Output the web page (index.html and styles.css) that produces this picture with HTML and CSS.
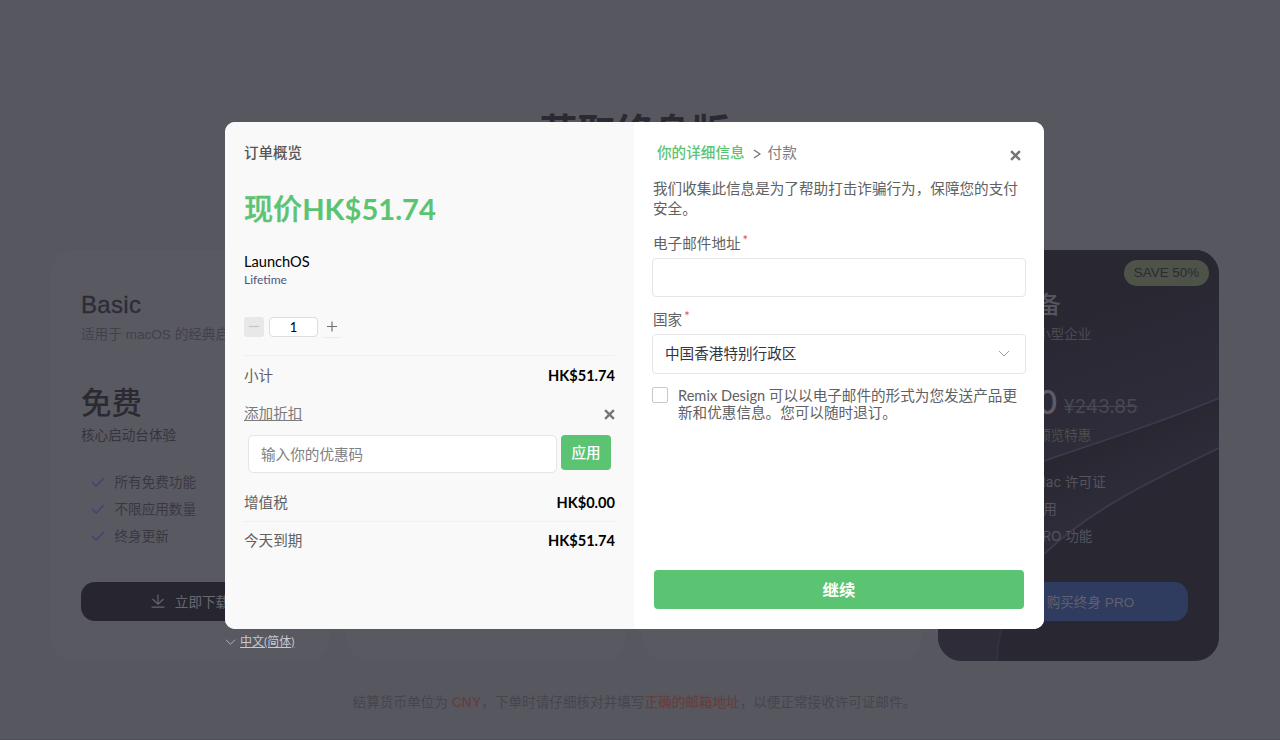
FILE: index.html
```html
<!DOCTYPE html>
<html lang="zh-CN">
<head>
<meta charset="utf-8">
<title>LaunchOS</title>
<link rel="stylesheet" href="styles.css">
</head>
<body>
<main class="page">
  <h1 class="page-title">获取终身版</h1>
  <section class="plans">
    <article class="plan">
      <h2 class="plan-name">Basic</h2>
      <p class="plan-desc">适用于 macOS 的经典启动台</p>
      <div class="plan-price">免费</div>
      <p class="plan-note">核心启动台体验</p>
      <ul class="features">
        <li><svg class="tick" viewBox="0 0 14 12"><path d="M1 6 5.2 10 13 2"/></svg>所有免费功能</li>
        <li><svg class="tick" viewBox="0 0 14 12"><path d="M1 6 5.2 10 13 2"/></svg>不限应用数量</li>
        <li><svg class="tick" viewBox="0 0 14 12"><path d="M1 6 5.2 10 13 2"/></svg>终身更新</li>
      </ul>
      <div class="plan-btn"><svg class="dl" viewBox="0 0 14 14"><path d="M7 0.5V10M1.5 5 7 10.2 12.5 5M0.5 13.2H13.5"/></svg>立即下载</div>
    </article>
    <article class="plan"></article>
    <article class="plan"></article>
    <article class="plan plan-dark">
      <svg class="waves" viewBox="0 0 281 411" preserveAspectRatio="none">
        <defs>
          <linearGradient id="w1" x1="0" y1="0" x2="0.35" y2="1"><stop offset="0.35" stop-color="#292731"/><stop offset="1" stop-color="#302e3d"/></linearGradient>
          <linearGradient id="w2" gradientUnits="userSpaceOnUse" x1="200" y1="175" x2="225" y2="235"><stop offset="0" stop-color="#282731"/><stop offset="1" stop-color="#2e2c39"/></linearGradient>
          <linearGradient id="w3" gradientUnits="userSpaceOnUse" x1="0" y1="290" x2="0" y2="380"><stop offset="0" stop-color="#3b394b"/><stop offset="1" stop-color="#33313f"/></linearGradient>
        </defs>
        <path fill="url(#w1)" d="M0 0H281V148C220 174 160 192 106 211C60 226 30 240 0 260Z"/>
        <path fill="url(#w2)" d="M281 148C220 174 160 192 106 211C60 226 30 240 0 260V411H59C60 370 78 330 106 304C155 258 215 230 281 198Z"/>
        <path class="wave-line" d="M281 148C220 174 160 192 106 211C60 226 30 240 0 260"/>
        <path class="wave-line" style="stroke:url(#w3)" d="M281 198C215 230 155 258 106 304C78 330 60 370 59 411"/>
      </svg>
      <span class="save">SAVE 50%</span>
      <h2 class="plan-name">3 台设备</h2>
      <p class="plan-desc">适合团队和小型企业</p>
      <div class="plan-price"><span class="now">¥120</span><s>¥243.85</s></div>
      <p class="plan-note">限时抢先版预览特惠</p>
      <ul class="features">
        <li><svg class="tick" viewBox="0 0 14 12"><path d="M1 6 5.2 10 13 2"/></svg>三台 Mac 许可证</li>
        <li><svg class="tick" viewBox="0 0 14 12"><path d="M1 6 5.2 10 13 2"/></svg>终身使用</li>
        <li><svg class="tick" viewBox="0 0 14 12"><path d="M1 6 5.2 10 13 2"/></svg>所有 PRO 功能</li>
      </ul>
      <div class="plan-btn"><svg class="dl" viewBox="0 0 14 14"><path d="M1 3H13V11H1ZM1 6H13"/></svg>购买终身 PRO</div>
    </article>
  </section>
  <p class="notice">结算货币单位为 <b>CNY</b>，下单时请仔细核对并填写<b>正确的邮箱地址</b>，以便正常接收许可证邮件。</p>
</main>

<div class="overlay">
  <div class="checkout">
    <section class="summary">
      <h3 class="summary-title">订单概览</h3>
      <div class="total">现价<b>HK$51.74</b></div>
      <div class="product">LaunchOS</div>
      <div class="variant">Lifetime</div>
      <div class="qty">
        <span class="qty-btn minus"><svg viewBox="0 0 12 12"><path d="M1 5.5H11"/></svg></span>
        <span class="qty-value">1</span>
        <span class="qty-btn"><svg viewBox="0 0 12 12"><path d="M1 5.5H11M6 0.5V10.5"/></svg></span>
      </div>
      <div class="row subtotal"><span>小计</span><b>HK$51.74</b></div>
      <div class="row discount"><a>添加折扣</a><svg class="x" viewBox="0 0 10 10"><path d="M1 1 9 9M9 1 1 9"/></svg></div>
      <div class="coupon"><span class="coupon-input">输入你的优惠码</span><span class="apply">应用</span></div>
      <div class="row vat"><span>增值税</span><b>HK$0.00</b></div>
      <div class="row due"><span>今天到期</span><b>HK$51.74</b></div>
    </section>
    <section class="details">
      <svg class="x close" viewBox="0 0 10 10"><path d="M1 1 9 9M9 1 1 9"/></svg>
      <div class="steps"><b>你的详细信息</b><svg class="sep" viewBox="0 0 8 10"><path d="M1 1 7 5 1 9"/></svg><span>付款</span></div>
      <p class="intro">我们收集此信息是为了帮助打击诈骗行为，保障您的支付安全。</p>
      <div class="label">电子邮件地址<i>*</i></div>
      <div class="field email"></div>
      <div class="label second">国家<i>*</i></div>
      <div class="field country"><span>中国香港特别行政区</span><svg class="chev" viewBox="0 0 12 8"><path d="M1 1 6 6 11 1"/></svg></div>
      <div class="consent"><span class="box"></span><span class="consent-text">Remix Design 可以以电子邮件的形式为您发送产品更新和优惠信息。您可以随时退订。</span></div>
      <div class="continue">继续</div>
    </section>
  </div>
  <div class="lang"><svg class="chev" viewBox="0 0 12 8"><path d="M1 1.5 6 6.5 11 1.5"/></svg><a>中文(简体)</a></div>
</div>
</body>
</html>
```
FILE: styles.css
```css
* { box-sizing: border-box; margin: 0; padding: 0; }
html, body { width: 1280px; height: 740px; overflow: hidden; }
body { position: relative; background: #575760; font-family: Inter, "Noto Sans CJK SC", sans-serif; font-size: 13.6px; color: #3f3e47; }
svg { display: block; fill: none; flex: none; }
ul { list-style: none; }

.page { height: 740px; padding: 107px 61px 0 50px; border-bottom: 1px solid #4f4c58; }
.page-title { height: 50px; line-height: 50px; text-align: center; font-size: 38px; font-weight: 700; color: #2b2a33; }
.plans { display: grid; grid-template-columns: 280px 280px 280px 281px; gap: 16px; margin-top: 93px; height: 411px; }
.plan { position: relative; padding: 38px 31px 0; border-radius: 24px; background: #595962; }
.plan-name { height: 34px; line-height: 34px; font-size: 24px; font-weight: 400; color: #2d2c35; }
.plan-desc { height: 20px; margin-top: 3px; line-height: 20px; color: #42414a; white-space: nowrap; font-family: "Liberation Sans", "Noto Sans CJK SC", sans-serif; }
.plan-price { margin-top: 36px; height: 44px; line-height: 44px; font-size: 30.5px; font-weight: 500; color: #2b2a33; white-space: nowrap; }
.plan-note { height: 20px; line-height: 20px; color: #35343d; }
.features { margin-top: 23px; padding-left: 10px; color: #393841; }
.features li { display: flex; align-items: center; gap: 9.5px; height: 27.3px; line-height: 18px; white-space: nowrap; }
.tick { width: 14px; height: 12px; stroke: #384578; stroke-width: 1.4; }
.plan-btn { display: flex; align-items: center; justify-content: center; gap: 10px; height: 39px; margin-top: 32px; border-radius: 14px; background: #272630; color: #696870; font-weight: 400; font-family: "Liberation Sans", "Noto Sans CJK SC", sans-serif; }
.dl { width: 14px; height: 14px; stroke: #66656d; stroke-width: 1.2; }

.plan:first-child .plan-name, .plan-dark .save { font-family: "Liberation Sans", "Noto Sans CJK SC", sans-serif; }
.plan:first-child .plan-name { letter-spacing: 0.3px; -webkit-text-stroke: 0.3px #2d2c35; }
.plan-dark { background: #292731; color: #5c5b64; overflow: hidden; }
.plan-dark > * { position: relative; }
.plan-dark .waves { position: absolute; left: 0; top: 0; width: 281px; height: 411px; }
.wave-line { stroke: #3b394b; stroke-width: 1.8; }
.plan-dark .save { position: absolute; right: 10px; top: 10px; width: 85px; height: 26px; line-height: 26px; border-radius: 13px; text-align: center; background: #4d5349; color: #2a2b32; font-size: 13.4px; }
.plan-dark .plan-name { width: 92px; font-size: 23.6px; font-weight: 500; color: #56555f; white-space: nowrap; }
.plan-dark .plan-desc { color: #4b4a54; }
.plan-dark .plan-price { display: flex; gap: 6px; color: #5d5c65; }
.now { width: 89px; display: flex; justify-content: flex-end; font-size: 32px; }
.plan-dark s { font-size: 19px; font-weight: 400; line-height: 51px; color: #494852; }
.plan-dark .plan-note { color: #4c4e4b; }
.plan-dark .features { color: #55545e; }
.plan-dark .plan-btn { background: #303b60; color: #5f616e; }

.notice { margin-top: 31px; line-height: 20px; text-align: center; color: #46454e; }
.notice b { color: #653f3e; font-weight: 500; }

.overlay { position: absolute; left: 225px; top: 122px; width: 819px; font-family: Lato, "Noto Sans CJK SC", sans-serif; font-size: 14.6px; color: #616161; }
.checkout { display: flex; height: 507px; border-radius: 10px; overflow: hidden; background: #fff; }
.summary { width: 409px; padding: 21px 19px 0; background: #f9f9f9; }
.summary-title { line-height: 20px; font-size: 14.5px; font-weight: 500; color: #555; }
.total { margin-top: 28px; line-height: 36px; font-size: 29.1px; font-weight: 500; color: #5bc473; -webkit-text-stroke: 0.4px #5bc473; }
.total b { font-weight: 700; -webkit-text-stroke: 0; }
.product { margin-top: 26px; line-height: 18px; color: #000; }
.variant { line-height: 18px; font-size: 12px; color: #4e5680; }
.qty { display: flex; gap: 5px; height: 20px; margin-top: 28px; }
.qty-btn { display: flex; align-items: center; justify-content: center; width: 20px; border-radius: 3px; box-shadow: 0 1px 1px #ececec; }
.qty-btn + .qty-value + .qty-btn { margin-left: -1px; }
.qty-btn svg { width: 12px; height: 12px; stroke: #707070; stroke-width: 1.2; }
.qty-btn.minus { background: #e8e8e8; box-shadow: none; }
.qty-btn.minus svg { stroke: #c4c4c4; }
.qty-value { width: 49px; line-height: 19px; border: 1px solid #ddd; border-radius: 4px; background: #fff; text-align: center; font-size: 13px; color: #000; }
.row { display: flex; justify-content: space-between; align-items: center; height: 20px; line-height: 20px; }
.row b { color: #000; font-weight: 700; }
.subtotal { margin-top: 18px; height: 31px; padding-top: 10px; border-top: 1px solid #f0f0f0; }
.discount { margin-top: 18px; }
.discount a { color: #7b7b7b; text-decoration: underline; }
.x { width: 11px; height: 11px; stroke: #757575; stroke-width: 2.1; }
.coupon { display: flex; align-items: flex-start; gap: 4px; margin: 11px 4px 0; }
.coupon-input { width: 309px; height: 38px; line-height: 37px; padding-left: 12px; border: 1px solid #e5e5e5; border-radius: 5px; background: #fff; color: #808080; }
.apply { width: 50px; height: 35px; line-height: 35px; border-radius: 4px; background: #5bc473; color: #fff; font-weight: 500; text-align: center; }
.vat { margin-top: 20px; }
.due { margin-top: 8px; height: 30px; padding-top: 9px; border-top: 1px solid #f0f0f0; }

.details { position: relative; display: flex; flex-direction: column; width: 410px; padding: 21px 19px 20px 19px; background: #fff; }
.close { position: absolute; right: 23px; top: 28px; }
.steps { display: flex; align-items: center; height: 20px; padding-left: 4px; line-height: 20px; color: #7c7c7c; }
.steps b { color: #5bc473; font-weight: 500; }
.sep { width: 8px; height: 10px; margin: 2px 7px 0 8px; stroke: #707070; stroke-width: 1.2; }
.intro { margin-top: 16px; line-height: 20px; }
.label { margin-top: 15px; height: 20px; line-height: 20px; }
.label i { position: relative; top: -4px; margin-left: 2px; font-style: normal; font-size: 13px; color: #dc4860; }
.label.second { margin-top: 13px; }
.field { width: 374px; margin: 4px 0 0 -1px; border: 1px solid #e5e5e5; border-radius: 4px; }
.email { height: 39px; }
.country { display: flex; align-items: center; justify-content: space-between; height: 40px; padding: 0 15px 1px 12px; line-height: 20px; color: #34343e; }
.chev { width: 12px; height: 8px; stroke: #a2a1bb; stroke-width: 1; }
.field .chev { stroke: #a2a1bb; }
.consent { display: flex; gap: 10px; margin: 14px -1px 0 -1px; }
.box { width: 16px; height: 16px; margin-top: -1px; flex: none; border: 1px solid #c8c8c8; border-radius: 2px; }
.consent-text { line-height: 16.7px; }
.continue { margin: auto 1px 0; height: 39px; line-height: 39px; border-radius: 4px; background: #5bc473; color: #fff; font-size: 16.4px; font-weight: 700; text-align: center; }

.lang { display: flex; align-items: center; gap: 4px; height: 20px; margin-top: 3px; font-size: 12px; line-height: 20px; color: #c7c7ce; }
.lang a { text-decoration: underline; }
.lang .chev { stroke: #b8b8c0; width: 11px; }
```
